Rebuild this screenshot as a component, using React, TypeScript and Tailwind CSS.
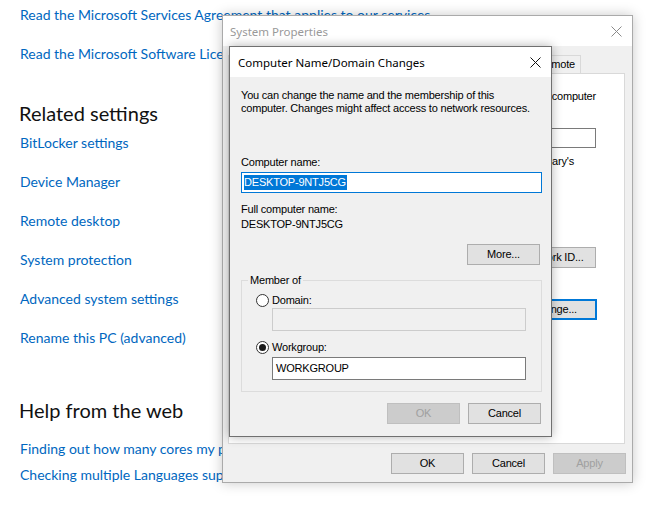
import React from "react";

const ui = "font-['Liberation_Sans',Arial,sans-serif] text-[11px] leading-[13px] tracking-[-0.2px] text-black";

function CloseIcon({ color }: { color: string }) {
  return (
    <svg width="11" height="11" viewBox="0 0 11 11" fill="none" stroke={color} strokeWidth="1">
      <path d="M0.5 0.5 L10.5 10.5 M10.5 0.5 L0.5 10.5" />
    </svg>
  );
}

function WinButton({
  label,
  disabled,
  focused,
  className = "",
}: {
  label: string;
  disabled?: boolean;
  focused?: boolean;
  className?: string;
}) {
  const look = disabled
    ? "bg-[#cccccc] border-[#bfbfbf] text-[#a0a0a0]"
    : focused
    ? "bg-[#e1e1e1] border-2 border-[#0078d7] text-black"
    : "bg-[#e1e1e1] border-[#adadad] text-black";
  return (
    <div className={`flex items-center justify-center h-[21px] w-[73px] border ${look} ${className}`}>
      {label}
    </div>
  );
}

function Radio({ checked }: { checked?: boolean }) {
  return (
    <div className="w-[13px] h-[13px] rounded-full border border-[#333333] bg-white flex items-center justify-center">
      {checked && <div className="w-[7px] h-[7px] rounded-full bg-[#1a1a1a]" />}
    </div>
  );
}

function SystemProperties() {
  const tabs = [
    { name: "Computer Name", w: "w-[88px]" },
    { name: "Hardware", w: "w-[58px]" },
    { name: "Advanced", w: "w-[60px]" },
    { name: "System Protection", w: "w-[96px]" },
    { name: "Remote", w: "w-[51px]" },
  ];
  return (
    <div className={`absolute left-[222px] top-[15px] w-[411px] h-[468px] border border-[#aaaaaa] bg-[#f0f0f0] flex flex-col shadow-[0_0_12px_rgba(0,0,0,0.22)] ${ui}`}>
      {/* title bar */}
      <div className="h-[30px] bg-white flex items-center pl-[7px] pr-[10px]">
        <span className="font-['Noto_Sans',sans-serif] text-[11.5px] tracking-normal text-[#999999]">System Properties</span>
        <div className="ml-auto">
          <CloseIcon color="#8a8a8a" />
        </div>
      </div>

      <div className="pl-[5px] pr-[7px] pt-[9px] flex flex-col">
        {/* tabs */}
        <div className="flex h-[18px]">
          {tabs.map((t) => (
            <div
              key={t.name}
              className={`${t.w} h-[18px] border border-b-0 border-[#d9d9d9] bg-[#f0f0f0] flex items-center justify-end pr-[5px] whitespace-nowrap overflow-hidden`}
            >
              {t.name}
            </div>
          ))}
        </div>

        {/* tab panel */}
        <div className="h-[371px] border border-[#d9d9d9] bg-white flex flex-col pt-[16px] pr-[28px] whitespace-nowrap">
          <div className="flex justify-end">Windows uses the following information to identify your computer</div>
          <div className="pl-[55px]">on the network.</div>
          <div className="mt-[12px] flex items-center">
            <span className="pl-[55px]">Computer description:</span>
            <div className="ml-auto w-[219px] h-[20px] border border-[#7a7a7a] bg-white" />
          </div>
          <div className="mt-[7px] flex justify-end pr-[22px]">For example: "Kitchen Computer" or "Mary's</div>
          <div className="pl-[150px]">Computer".</div>
          <div className="mt-[18px] pl-[55px]">Full computer name:</div>
          <div className="mt-[7px] pl-[55px]">Workgroup:</div>
          <div className="mt-[15px] flex items-center">
            <span className="pl-[20px]">To use a wizard to join a domain or</span>
            <WinButton label="Network ID..." className="ml-auto w-[86px] h-[20px]" />
          </div>
          <div className="mt-[31px] flex items-center">
            <span className="pl-[20px]">To rename this computer or change</span>
            <WinButton label="Change..." focused className="ml-auto mr-[-1px] w-[86px] h-[20px]" />
          </div>
        </div>

        {/* bottom buttons */}
        <div className="mt-[9px] flex justify-end gap-[8px] mr-[-1px]">
          <WinButton label="OK" className="w-[72px]" />
          <WinButton label="Cancel" />
          <WinButton label="Apply" disabled />
        </div>
      </div>
    </div>
  );
}

function NameDialog() {
  return (
    <div className={`absolute left-[229px] top-[46px] w-[323px] h-[391px] border border-[#707070] bg-[#f0f0f0] flex flex-col shadow-[0_0_10px_rgba(0,0,0,0.3)] ${ui}`}>
      {/* title bar */}
      <div className="h-[30px] bg-white flex items-center pl-[8px] pr-[10px]">
        <span className="font-['Noto_Sans',sans-serif] text-[11.5px] tracking-normal text-black">Computer Name/Domain Changes</span>
        <div className="ml-auto">
          <CloseIcon color="#111111" />
        </div>
      </div>

      <div className="flex flex-col pl-[11px] pr-[9px] pt-[12px]">
        <p>
          You can change the name and the membership of this
          <br />
          computer. Changes might affect access to network resources.
        </p>

        <div className="mt-[41px]">Computer name:</div>
        <div className="mt-[3px] h-[21px] border border-[#0078d7] bg-white flex items-center pl-[2px]">
          <span className="bg-[#0078d7] text-white leading-[15px] pr-[1px]">DESKTOP-9NTJ5CG</span>
        </div>

        <div className="mt-[9px] leading-[15px]">Full computer name:</div>
        <div className="leading-[15px]">DESKTOP-9NTJ5CG</div>

        <WinButton label="More..." className="mt-[12px] self-end mr-[2px] w-[72px]" />

        <fieldset className="mt-[9px] border border-[#dcdcdc] pl-[14px] pr-[15px] pb-[11px]">
          <legend className="ml-[-8px] px-[2px]">Member of</legend>
          <div className="mt-[6px] flex items-center gap-[3px] h-[14px]">
            <Radio />
            <span>Domain:</span>
          </div>
          <div className="mt-[1px] ml-[16px] h-[23px] border border-[#cccccc] bg-[#f0f0f0]" />
          <div className="mt-[9px] flex items-center gap-[3px] h-[14px]">
            <Radio checked />
            <span>Workgroup:</span>
          </div>
          <div className="mt-[3px] ml-[16px] h-[23px] border border-[#7a7a7a] bg-white flex items-center pl-[3px]">
            WORKGROUP
          </div>
        </fieldset>

        <div className="mt-[11px] flex justify-end gap-[8px] mr-[1px]">
          <WinButton label="OK" disabled />
          <WinButton label="Cancel" />
        </div>
      </div>
    </div>
  );
}

export default function App() {
  const link = "block text-[#0067c0] text-[14px] leading-[20px] whitespace-nowrap";
  const heading = "text-[20px] leading-[28px] font-normal text-[#111111] whitespace-nowrap";
  return (
    <div className="relative w-[649px] h-[507px] overflow-hidden bg-white font-['Lato',sans-serif]">
      {/* settings page behind the dialogs */}
      <div className="flex flex-col pl-[20px] pt-[5px]">
        <a className={link}>Read the Microsoft Services Agreement that applies to our services</a>
        <a className={`${link} mt-[19px]`}>Read the Microsoft Software License Terms</a>

        <h2 className={`${heading} mt-[35px] ml-[-1px]`}>Related settings</h2>
        <a className={`${link} mt-[6px]`}>BitLocker settings</a>
        <a className={`${link} mt-[19px]`}>Device Manager</a>
        <a className={`${link} mt-[19px]`}>Remote desktop</a>
        <a className={`${link} mt-[19px]`}>System protection</a>
        <a className={`${link} mt-[19px]`}>Advanced system settings</a>
        <a className={`${link} mt-[19px]`}>Rename this PC (advanced)</a>

        <h2 className={`${heading} mt-[48px] ml-[-1px]`}>Help from the web</h2>
        <a className={`${link} mt-[15px]`}>Finding out how many cores my processor has</a>
        <a className={`${link} mt-[6px]`}>Checking multiple Languages support</a>
      </div>

      <SystemProperties />
      <NameDialog />
    </div>
  );
}
